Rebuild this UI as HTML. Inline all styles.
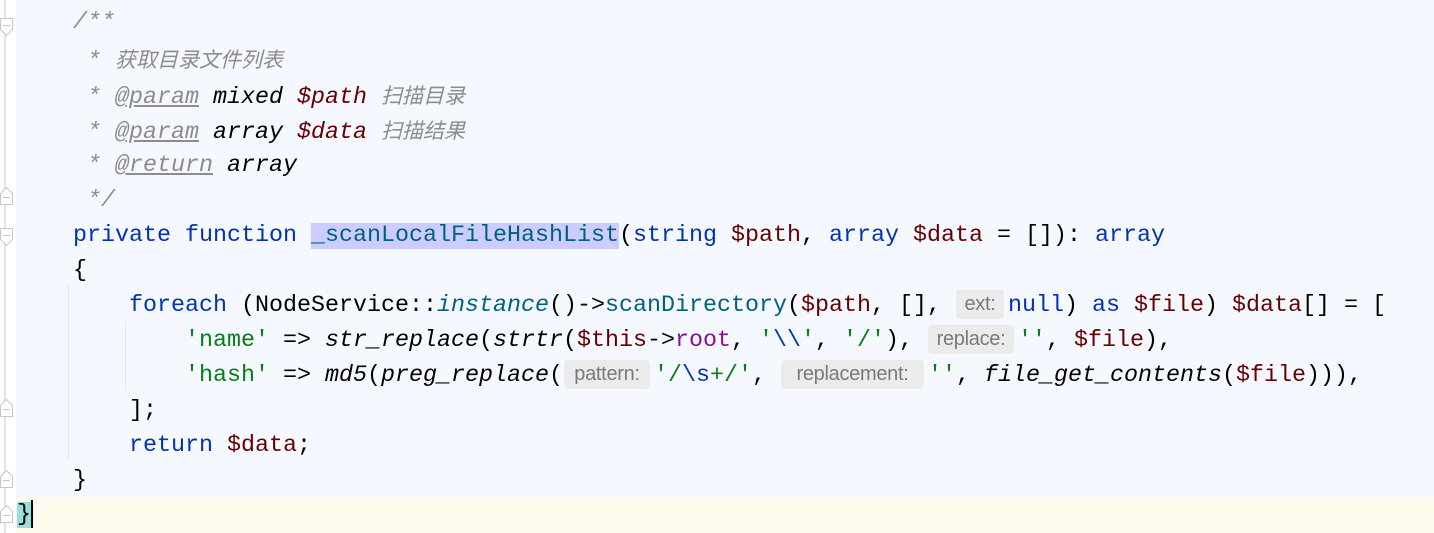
<!DOCTYPE html>
<html><head><meta charset="utf-8"><style>
body{margin:0;width:1434px;height:533px;overflow:hidden;background:#f5f8fe;position:relative;font-family:"Liberation Mono","Noto Sans CJK SC",monospace;font-size:23.33px;}
.gut{position:absolute;left:0;top:0;width:16px;height:533px;background:#fff;}
.gut .ln{position:absolute;left:4px;top:0;width:2px;height:533px;background:#e4e4e4;}
.line{position:absolute;left:17px;height:35px;line-height:35px;white-space:pre;color:#000;}
.c{color:#8c8c8c;font-style:italic}
.cn{color:#8c8c8c;font-style:italic;font-family:"Noto Sans CJK SC",sans-serif;font-size:21px;line-height:35px}
.tag{color:#8c8c8c;font-style:italic;text-decoration:underline}
.ci{color:#000;font-style:italic}
.cv{color:#660000;font-style:italic}
.k{color:#0033b3}
.v{color:#660000}
.s{color:#067d17}
.f{font-style:italic}
.m{color:#871094}
.t{color:#00627a}
.esc{color:#0037a6}
.h{display:inline-block;height:29px;line-height:29px;vertical-align:middle;margin:0 4px 0 1px;text-align:center;background:#ebebeb;border-radius:4px;color:#7a7a7a;font-family:"Liberation Sans",sans-serif;font-size:20px;letter-spacing:-0.3px}
.hl{background:#ccccff}
.guide{position:absolute;width:1px;background:#e6e6e6}
</style></head><body>
<div style="position:absolute;left:16px;top:497px;width:1418px;height:36px;background:#fcfaed"></div>
<div class="gut"><div class="ln"></div>
<svg width="16" height="533" style="position:absolute;left:0;top:0">
<g fill="#fff" stroke="#c8c8c8" stroke-width="1">
<path d="M0.5 18.5H12.5V29.5L6.5 35.5L0.5 29.5Z"/><path d="M3 25.5H10" />
<path d="M0.5 204.5H12.5V193.5L6.5 187.5L0.5 193.5Z"/><path d="M3 197.5H10"/>
<path d="M0.5 228.5H12.5V239.5L6.5 245.5L0.5 239.5Z"/><path d="M3 235.5H10"/>
<path d="M0.5 416.5H12.5V405.5L6.5 399.5L0.5 405.5Z"/><path d="M3 409.5H10"/>
<path d="M0.5 487.5H12.5V476.5L6.5 470.5L0.5 476.5Z"/><path d="M3 480.5H10"/>
<path d="M0.5 522.5H12.5V511.5L6.5 505.5L0.5 511.5Z"/><path d="M3 515.5H10"/>
</g></svg></div>
<div class="guide" style="left:68px;top:285px;height:175px"></div>
<div class="guide" style="left:125px;top:322px;height:68px"></div>

<div class="line" style="top:6px">    <span class="c">/**</span></div>
<div class="line" style="top:42px">     <span class="c">* </span><span class="cn">获取目录文件列表</span></div>
<div class="line" style="top:78px">     <span class="c">* </span><span class="tag">@param</span> <span class="ci">mixed</span> <span class="cv">$path</span> <span class="cn">扫描目录</span></div>
<div class="line" style="top:113px">     <span class="c">* </span><span class="tag">@param</span> <span class="ci">array</span> <span class="cv">$data</span> <span class="cn">扫描结果</span></div>
<div class="line" style="top:149px">     <span class="c">* </span><span class="tag">@return</span> <span class="ci">array</span></div>
<div class="line" style="top:184px">     <span class="c">*/</span></div>
<div class="line" style="top:219px">    <span class="k">private function</span> <span class="hl t">_scanLocalFileHashList</span>(<span class="k">string</span> <span class="v">$path</span>, <span class="k">array</span> <span class="v">$data</span> = []): <span class="k">array</span></div>
<div class="line" style="top:254px">    {</div>
<div class="line" style="top:289px">        <span class="k">foreach</span> (NodeService::<span class="f t">instance</span>()-&gt;<span class="t">scanDirectory</span>(<span class="v">$path</span>, [], <span class="h" style="width:48px">ext:</span><span class="k">null</span>) <span class="k">as</span> <span class="v">$file</span>) <span class="v">$data</span>[] = [</div>
<div class="line" style="top:324px">            <span class="s">'name'</span> =&gt; <span class="f">str_replace</span>(<span class="f">strtr</span>(<span class="v">$this</span>-&gt;<span class="m">root</span>, <span class="s">'<span class="esc">\\</span>'</span>, <span class="s">'/'</span>), <span class="h" style="width:86px">replace:</span><span class="s">''</span>, <span class="v">$file</span>),</div>
<div class="line" style="top:359px">            <span class="s">'hash'</span> =&gt; <span class="f">md5</span>(<span class="f">preg_replace</span>(<span class="h" style="width:86px">pattern:</span><span class="s">'/<span class="esc">\s</span>+/'</span>, <span class="h" style="width:143px">replacement:</span><span class="s">''</span>, <span class="f">file_get_contents</span>(<span class="v">$file</span>))),</div>
<div class="line" style="top:394px">        ];</div>
<div class="line" style="top:429px">        <span class="k">return</span> <span class="v">$data</span>;</div>
<div class="line" style="top:464px">    }</div>
<div class="line" style="top:498px"><span style="background:#99dddd">}</span><span style="display:inline-block;width:2px;height:28px;background:#000;vertical-align:middle"></span></div>
</body></html>
